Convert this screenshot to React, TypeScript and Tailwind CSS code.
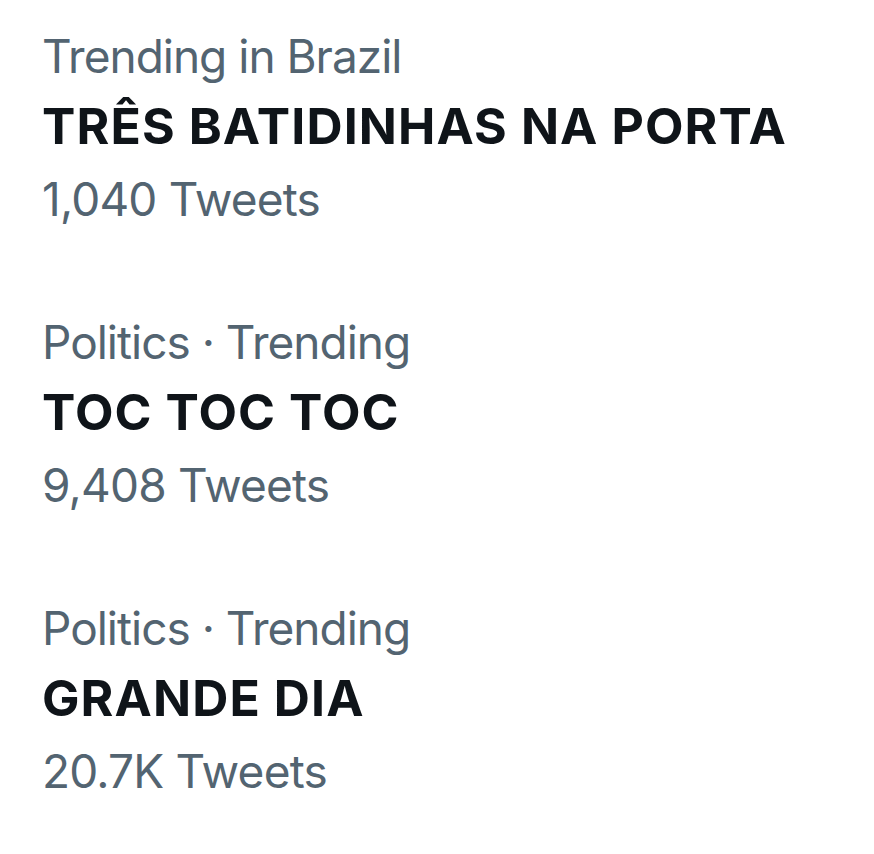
import React from "react";

const trends = [
  { context: "Trending in Brazil", name: "TRÊS BATIDINHAS NA PORTA", count: "1,040 Tweets" },
  { context: "Politics · Trending", name: "TOC TOC TOC", count: "9,408 Tweets" },
  { context: "Politics · Trending", name: "GRANDE DIA", count: "20.7K Tweets" },
];

export default function App() {
  return (
    <div
      className="min-h-screen w-full bg-white pl-[42px] pt-[21px]"
      style={{ fontFamily: "Inter, 'Noto Sans', sans-serif" }}
    >
      <div className="flex flex-col gap-[70px]">
        {trends.map((t) => (
          <div key={t.name} className="flex flex-col">
            <div className="text-[46px] leading-[70px] text-[#536471] tracking-[-1px]">{t.context}</div>
            <div className="text-[50px] leading-[70px] font-bold text-[#0f1419] tracking-[1.1px]">{t.name}</div>
            <div className="text-[46px] leading-[76px] text-[#536471] tracking-[-0.8px]">{t.count}</div>
          </div>
        ))}
      </div>
    </div>
  );
}
